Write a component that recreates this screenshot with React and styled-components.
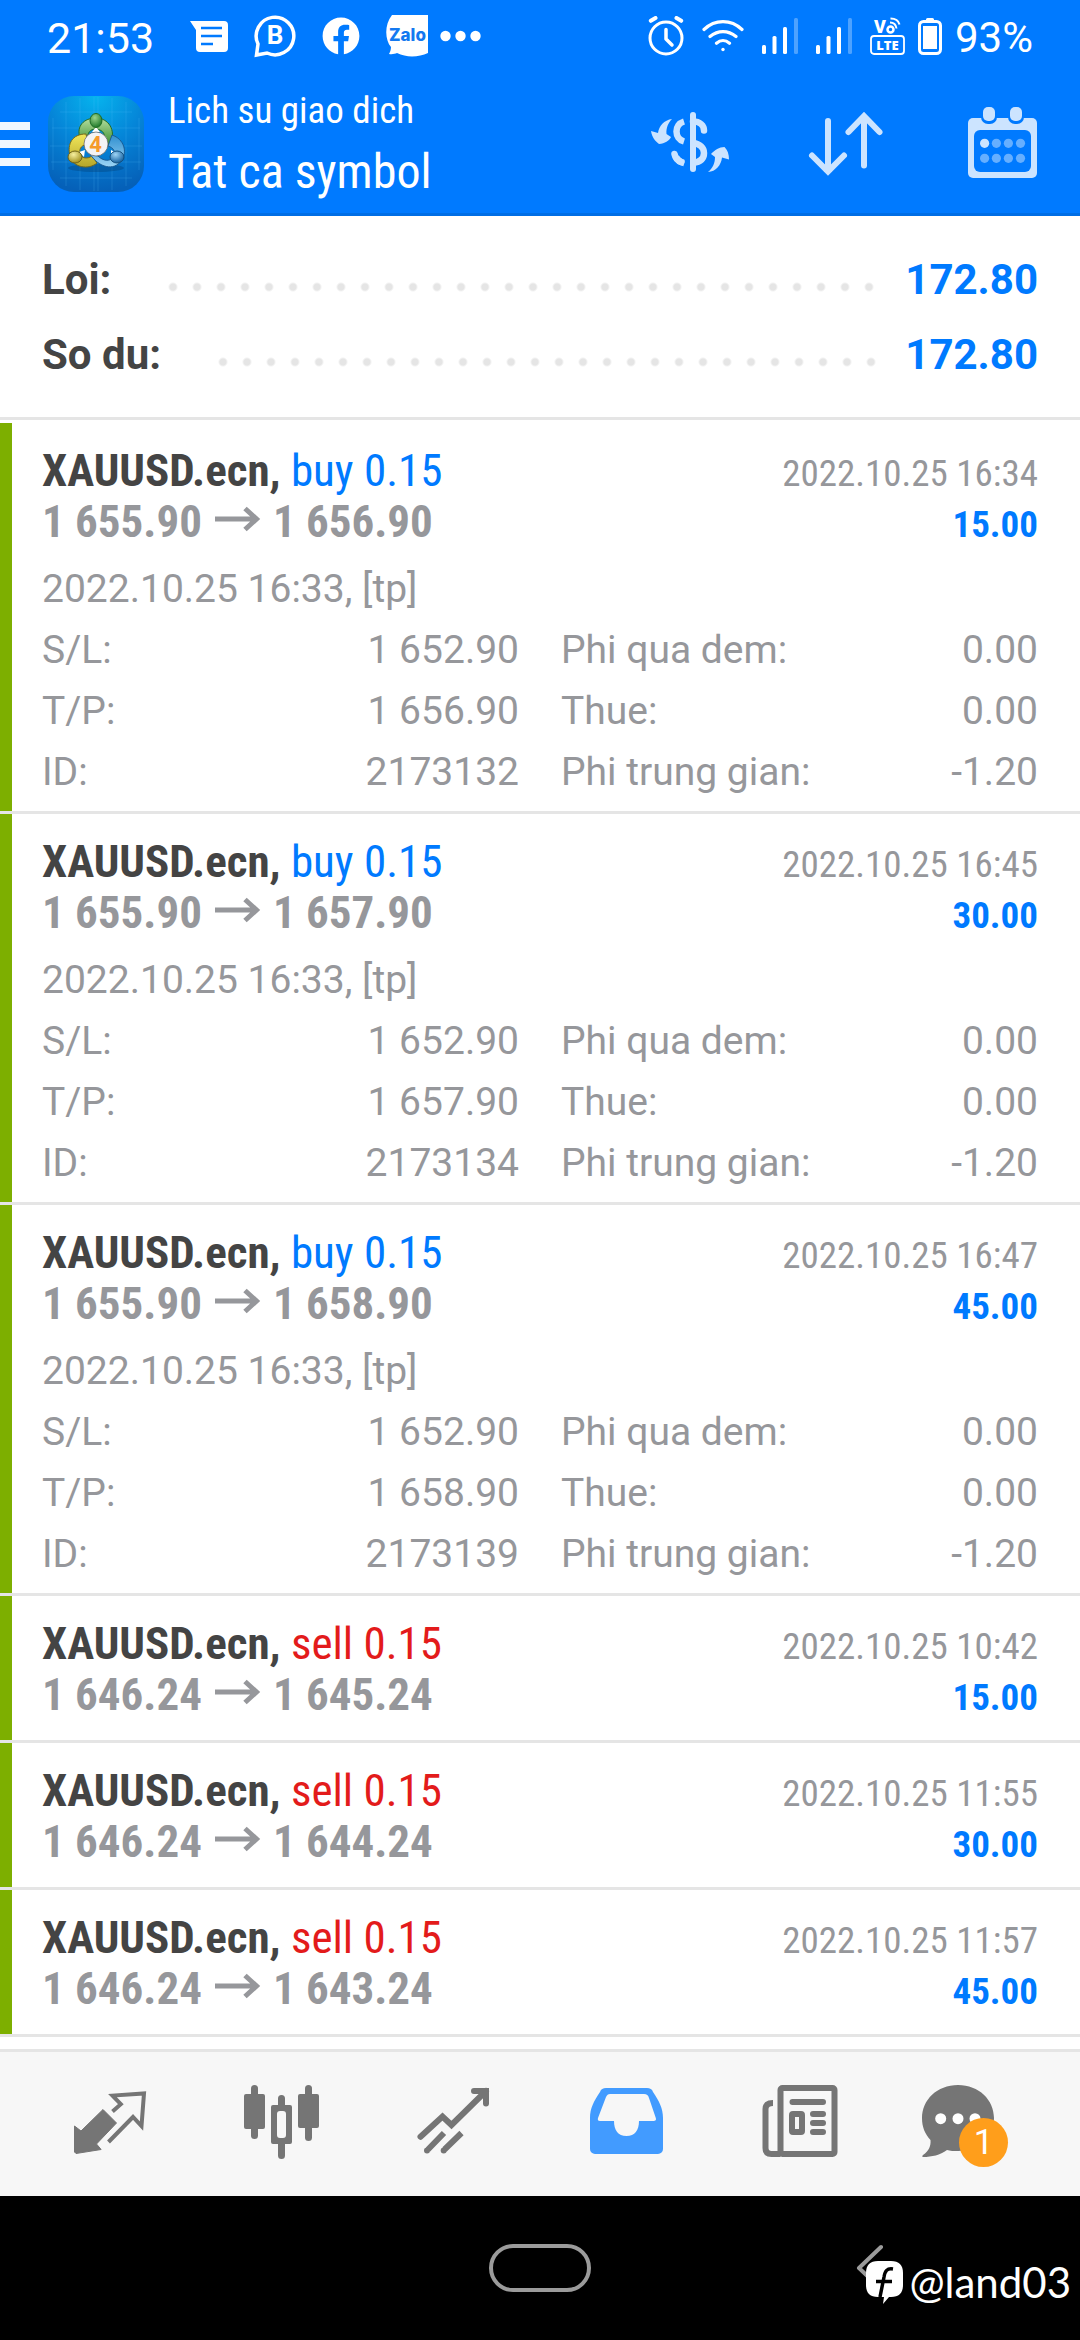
import React from 'react';
import styled, {createGlobalStyle} from 'styled-components';
import {FaFacebook} from 'react-icons/fa';

const GlobalStyle = createGlobalStyle `
  *{
    box-sizing: border-box;
  }
  body{
    margin: 0;
    background: #fff;
    font-family: Roboto, sans-serif;
  }
  h1, h2, p, dl, dt, dd, ul{
    margin: 0;
    padding: 0;
    font-weight: 400;
  }
  button{
    border: none;
    background: none;
    padding: 0;
    cursor: pointer;
  }
  svg{
    display: block;
    flex: none;
  }
`

const condensed = '"Roboto Condensed", Roboto, sans-serif'

const Screen = styled.div `
  min-height: 100vh;
  display: flex;
  flex-direction: column;
`

const Header = styled.header `
  background: #007aff;
  color: #fff;
  box-shadow: inset 0 -3px 0 #006ee5;
`

const StatusBar = styled.div `
  display: flex;
  justify-content: space-between;
  height: 72px;
  padding: 0 47px;
`

const StatusGroup = styled.div `
  display: flex;
  align-items: center;
  gap: ${props => props.$gap}px;
`

const StatusText = styled.span `
  font-size: 42px;
  line-height: 48px;
  padding-top: 3px;
`

const Clock = styled(StatusText) `
  font-size: 43px;
  margin-right: 10px;
`

const AppBar = styled.div `
  display: flex;
  align-items: center;
  height: 144px;
`

const MenuButton = styled.button `
  width: 30px;
  display: flex;
  flex-direction: column;
  gap: 10px;
  margin-right: 18px;
  span{
    height: 8px;
    background: #f0f7ff;
  }
`

const Titles = styled.div `
  flex: 1;
  padding: 4px 0 0 24px;
  font-family: ${condensed};
`

const Subtitle = styled.p `
  font-size: 37px;
  line-height: 52px;
`

const Title = styled.h1 `
  font-size: 48px;
  line-height: 70px;
`

const ToolButton = styled.button `
  width: 156px;
  height: 144px;
  display: flex;
  align-items: center;
  justify-content: center;
  color: #cce4ff;
`

const Summary = styled.section `
  padding: 26px 42px 25px;
  border-bottom: 3px solid #e5e5e5;
  margin-bottom: 3px;
`

const SummaryRow = styled.div `
  display: flex;
  align-items: baseline;
  font-size: 42px;
  line-height: 75px;
  font-weight: 700;
  color: #444;
`

const Leader = styled.span `
  flex: 1;
  height: 14px;
  margin: 0 25px 0 50px;
  background: radial-gradient(circle, #e5e5e5 3px, transparent 5px) 0 50% / 24px 14px repeat-x;
`

const SummaryValue = styled.span `
  color: #007aff;
`

const Deals = styled.ul `
  flex: 1;
  list-style: none;
`

const Deal = styled.li `
  border-bottom: 3px solid #e5e5e5;
`

const DealBody = styled.div `
  border-left: 12px solid #7daf00;
  padding: 22px 42px ${props => props.$open ? '8px' : '20px'} 30px;
`

const DealLine = styled.div `
  display: flex;
  align-items: baseline;
  justify-content: space-between;
  height: 51px;
  font-family: ${condensed};
  font-size: 37px;
  line-height: 51px;
  color: #96979b;
`

const Symbol = styled.h2 `
  font-size: 45px;
  color: ${props => props.$sell ? '#e31b1b' : '#007aff'};
  b{
    color: #444;
  }
`

const Prices = styled.p `
  font-size: 45px;
  font-weight: 700;
  svg{
    display: inline-block;
    margin: 0 11px 0 12px;
  }
`

const Profit = styled.b `
  color: #007aff;
`

const Details = styled.div `
  margin-top: 12px;
  font-size: 39px;
  line-height: 61px;
  color: #96979b;
`

const DetailList = styled.dl `
  display: grid;
  grid-template-columns: 1fr 1fr;
  column-gap: 42px;
  div{
    display: flex;
    justify-content: space-between;
  }
`

const TabBar = styled.nav `
  display: flex;
  padding: 0 24px;
  border-top: 3px solid #e5e5e5;
  background: #f7f7f7;
`

const Tab = styled.button `
  flex: 1;
  height: 144px;
  display: flex;
  align-items: center;
  justify-content: center;
  color: ${props => props.$active ? '#429bff' : '#757575'};
`

const TabIcon = styled.span `
  position: relative;
`

const Badge = styled.span `
  position: absolute;
  left: 37px;
  top: 42px;
  width: 49px;
  height: 49px;
  border-radius: 50%;
  background: #ff9e1b;
  color: #fff;
  font: 35px/49px Roboto, sans-serif;
  text-align: center;
`

const SystemNav = styled.div `
  position: relative;
  height: 144px;
  background: #000;
  display: grid;
  grid-template-columns: 1fr auto 1fr;
  align-items: center;
`

const HomeButton = styled.button `
  grid-column: 2;
  width: 102px;
  height: 48px;
  border: 4px solid #9b9b9b;
  border-radius: 24px;
`

const BackButton = styled.button `
  justify-self: end;
  margin-right: 196px;
`

const Watermark = styled.div `
  position: absolute;
  right: 9px;
  bottom: 33px;
  display: flex;
  align-items: center;
  gap: 6px;
  color: #fff;
  font: 42px/50px Lato, sans-serif;
`

const deals = [
  {side: 'buy', open: '1 655.90', close: '1 656.90', time: '2022.10.25 16:34', profit: '15.00', sl: '1 652.90', tp: '1 656.90', id: '2173132'},
  {side: 'buy', open: '1 655.90', close: '1 657.90', time: '2022.10.25 16:45', profit: '30.00', sl: '1 652.90', tp: '1 657.90', id: '2173134'},
  {side: 'buy', open: '1 655.90', close: '1 658.90', time: '2022.10.25 16:47', profit: '45.00', sl: '1 652.90', tp: '1 658.90', id: '2173139'},
  {side: 'sell', open: '1 646.24', close: '1 645.24', time: '2022.10.25 10:42', profit: '15.00'},
  {side: 'sell', open: '1 646.24', close: '1 644.24', time: '2022.10.25 11:55', profit: '30.00'},
  {side: 'sell', open: '1 646.24', close: '1 643.24', time: '2022.10.25 11:57', profit: '45.00'}
]

// status bar icons

const MessageIcon = () => (
  <svg width="38" height="31" viewBox="0 0 38 31">
    <path d="M0 0h34a4 4 0 0 1 4 4v23a4 4 0 0 1-4 4H10a4 4 0 0 1-4-4V9z" fill="#fff"/>
    <path d="M11 7h21M11 15h21M11 23h12" stroke="#007aff" strokeWidth="2.500"/>
  </svg>
)

const BusinessIcon = () => (
  <svg width="42" height="44" viewBox="0 0 42 44">
    <path d="M2.500 41l1.500-11A18.800 18.800 0 1 1 13 39z" fill="none" stroke="#fff" strokeWidth="3.500"/>
    <text x="21" y="30" textAnchor="middle" fontSize="26" fontWeight="700" fontFamily="Roboto" fill="#fff">B</text>
  </svg>
)

const ZaloIcon = () => (
  <svg width="42" height="42" viewBox="0 0 42 42">
    <path d="M6 0h36v38c-9 4-21 5-31 0-2 1-5 1.500-8 1 1-2 2-4 2-7C-1 25-2 10 6 0z" fill="#fff"/>
    <text x="21.500" y="26" textAnchor="middle" fontSize="17" fontWeight="800" fontFamily="Inter" fill="#1479f0">Zalo</text>
  </svg>
)

const DotsIcon = () => (
  <svg width="41" height="12" viewBox="0 0 41 12" fill="#fff">
    <circle cx="5.500" cy="6" r="5.200"/>
    <circle cx="20.500" cy="6" r="5.200"/>
    <circle cx="35.500" cy="6" r="5.200"/>
  </svg>
)

const AlarmIcon = () => (
  <svg width="36" height="40" viewBox="0 0 36 40" fill="none" stroke="#fff" strokeLinecap="round" strokeLinejoin="round">
    <circle cx="18" cy="22" r="16" strokeWidth="3"/>
    <path d="M18 13.500v9.500l6 6" strokeWidth="3.500"/>
    <path d="M2.800 4.800L7.500 2M33.200 4.800L28.500 2" strokeWidth="4"/>
  </svg>
)

const WifiIcon = () => (
  <svg width="42" height="32" viewBox="0 0 42 32" fill="none" stroke="#fff" strokeWidth="3.200" strokeLinecap="round">
    <path d="M2 9.500C13-1 29-1 40 9.500M8 16.500c8-6.500 18-6.500 26 0M14.500 23.200c4-3.500 9-3.500 13 0"/>
    <circle cx="21" cy="29.500" r="1.700" fill="#fff" stroke="none"/>
  </svg>
)

const SignalIcon = () => (
  <svg width="36" height="36" viewBox="0 0 36 36" fill="#fff">
    <rect x="0" y="27" width="4" height="9" rx="1.500"/>
    <rect x="10.500" y="18" width="4" height="18" rx="1.500"/>
    <rect x="21" y="9" width="4" height="27" rx="1.500"/>
    <rect x="32" y="0" width="4" height="36" rx="1.500" opacity=".3"/>
  </svg>
)

const VolteIcon = () => (
  <svg width="35" height="38" viewBox="0 0 35 38" fill="none" stroke="#fff">
    <text x="4" y="16" fontSize="18" fontWeight="900" fontFamily="Roboto" fill="#fff" stroke="none">V</text>
    <circle cx="20.500" cy="12.500" r="3" strokeWidth="2.500"/>
    <path d="M20 5.500c4 0 6 2 6.500 6M20.500 1.500c5 0 8 2 9 6" strokeWidth="2"/>
    <rect x="1" y="19" width="33" height="18" rx="3" strokeWidth="1.800"/>
    <text x="17.500" y="33" textAnchor="middle" fontSize="13" fontWeight="800" fontFamily="Open Sans" fill="#fff" stroke="none">LTE</text>
  </svg>
)

const BatteryIcon = () => (
  <svg width="24" height="37" viewBox="0 0 24 37">
    <path d="M8 2V1.500A1.500 1.500 0 0 1 9.500 0h5A1.500 1.500 0 0 1 16 1.500V3H8z" fill="#fff"/>
    <rect x="1.500" y="3.500" width="21" height="32" rx="4" fill="none" stroke="#fff" strokeWidth="3"/>
    <rect x="5" y="8" width="14" height="23" fill="#fff"/>
  </svg>
)

// app bar icons

const Logo = () => (
  <svg width="96" height="96" viewBox="0 0 96 96">
    <defs>
      <radialGradient id="sky" cx=".5" cy="0" r="1">
        <stop offset="0" stopColor="#06b4ee"/>
        <stop offset=".5" stopColor="#0585d8"/>
        <stop offset="1" stopColor="#0560b8"/>
      </radialGradient>
      <linearGradient id="green" x1="0" y1="0" x2="0" y2="1">
        <stop offset="0" stopColor="#b5dfa0"/>
        <stop offset="1" stopColor="#3c8f31"/>
      </linearGradient>
      <linearGradient id="yellow" x1="0" y1="0" x2="0" y2="1">
        <stop offset="0" stopColor="#f1e65a"/>
        <stop offset="1" stopColor="#b5a62a"/>
      </linearGradient>
      <linearGradient id="blue" x1="0" y1="0" x2="0" y2="1">
        <stop offset="0" stopColor="#2f8fd0"/>
        <stop offset="1" stopColor="#9bd4f5"/>
      </linearGradient>
      <radialGradient id="greenBall" cx=".4" cy=".3" r=".7">
        <stop offset="0" stopColor="#9bd48b"/>
        <stop offset="1" stopColor="#1f7a2a"/>
      </radialGradient>
      <radialGradient id="yellowBall" cx=".4" cy=".3" r=".7">
        <stop offset="0" stopColor="#f6f0a0"/>
        <stop offset="1" stopColor="#a08f1c"/>
      </radialGradient>
      <radialGradient id="blueBall" cx=".4" cy=".3" r=".7">
        <stop offset="0" stopColor="#9ed4f5"/>
        <stop offset="1" stopColor="#14609f"/>
      </radialGradient>
    </defs>
    <rect width="96" height="96" rx="26" fill="url(#sky)"/>
    <path d="M5 22v52M18 6v84M32 2v92M46 1v94M50 1v94M64 2v92M78 6v84M91 22v52M4 32h88M2 50h92M3 66h90M12 82h72M12 16h72" stroke="#5cc2ff" strokeOpacity=".2" fill="none"/>
    <ellipse cx="48" cy="72" rx="28" ry="4" fill="#04386e" opacity=".35"/>
    <g strokeLinejoin="round" strokeWidth="1">
      <path d="M32 42c-4-12 4-20 16-20s21 12 14 26l-7-2c3-7 1-12-7-13-6 0-9 4-8 10z" fill="url(#green)" stroke="#256d22"/>
      <path d="M38 38c-14 0-19 10-16 22 3 12 19 14 27 7l-5-7c-4 3-11 3-12-3-1-5 2-8 8-9z" fill="url(#yellow)" stroke="#75691a"/>
      <path d="M64 39c12 4 16 17 9 26-7 10-22 7-31-7l8 2c5 5 12 6 15 1 3-5 1-9-5-11z" fill="url(#blue)" stroke="#1a5c94"/>
      <path d="M48 31l4 5h-8zM37 54l-1 7-5-5zM63 54l5 3-5 4z" fill="#fff"/>
      <ellipse cx="48" cy="24.500" rx="6" ry="7" fill="url(#greenBall)" stroke="#1f6b25"/>
      <ellipse cx="27" cy="61" rx="7" ry="6" fill="url(#yellowBall)" stroke="#6e631a"/>
      <ellipse cx="69" cy="61" rx="7" ry="6" fill="url(#blueBall)" stroke="#14507f"/>
    </g>
    <circle cx="48" cy="48" r="12" fill="#f3f3f5" stroke="#5c5c5c" strokeWidth=".7"/>
    <text x="47.500" y="56" textAnchor="middle" fontSize="22" fontWeight="700" fontFamily="Roboto" fill="#f59a2b">4</text>
  </svg>
)

const CurrencyIcon = () => (
  <svg width="96" height="96" viewBox="0 0 96 96" fill="none">
    <g stroke="currentColor" strokeWidth="6.500">
      <path d="M51 19v54" strokeLinecap="round" strokeWidth="6"/>
      <path d="M51 25.500c7 0 11 4 11 9M32.500 58c1 5 4 7 7 8" strokeLinecap="round"/>
      <path d="M42 25.500c-10 3-10 17 0 20M51 47c7 1 11 5 11 10 0 6-4 9-11 10M34 61c2 4 5 5.500 8 6"/>
    </g>
    <path d="M9 35l7 2c1-7 6-13 14-14-4 4-6 9-5.500 15l4.500 3c-2 4-6 6.500-12 7-4-3-7-7-8-13z" fill="currentColor"/>
    <path d="M66 76c5-4 7-9 7-15l-4-3c4-4 8-7 13.500-7 3 3 4.500 7 4.500 12.500l-7-2c-1 8-6 14-14 14.500z" fill="currentColor"/>
  </svg>
)

const SortIcon = () => (
  <svg width="96" height="96" viewBox="0 0 96 96" fill="none" stroke="currentColor" strokeWidth="6" strokeLinecap="round">
    <path d="M30 25v49M14 59.500l16 16 16-16M66 69.500V21M50.500 36L66 20l15.500 16"/>
  </svg>
)

const CalendarIcon = () => (
  <svg width="96" height="96" viewBox="0 0 96 96">
    <rect x="14" y="22" width="69" height="60" rx="5" fill="currentColor"/>
    <rect x="20" y="34" width="57" height="42" rx="6" fill="#007aff"/>
    <rect x="27" y="9" width="16" height="19" rx="7" fill="#007aff"/>
    <rect x="54" y="9" width="16" height="19" rx="7" fill="#007aff"/>
    <rect x="29" y="11" width="12" height="14" rx="5" fill="currentColor"/>
    <rect x="56" y="11" width="12" height="14" rx="5" fill="currentColor"/>
    {[47.3, 62.3].map(y => [30.600, 42.400, 54.400, 66.500].map(x => (
      <circle key={x + '-' + y} cx={x} cy={y} r="4.600" fill={x < 40 && y < 50 ? '#cce4ff' : '#66afff'}/>
    )))}
  </svg>
)

const PriceArrow = () => (
  <svg width="48" height="31" viewBox="0 0 48 31" fill="none" stroke="#96979b" strokeWidth="5">
    <path d="M1 13h42M31 2.500L42.500 13 31 23.500"/>
  </svg>
)

// tab bar icons

const QuotesIcon = () => (
  <svg width="96" height="96" viewBox="0 0 96 96">
    <path d="M41 33.500L54.500 47 34.500 68l4.600 5.500L14 77.500l-1.500-1.500V50l6.500 5z" fill="currentColor" stroke="currentColor" strokeLinejoin="round"/>
    <path d="M50.500 35.500l8.300-7.300-8.300-8.600L82 17.500 79.500 50 71 41 46.500 66" fill="none" stroke="currentColor" strokeWidth="4"/>
  </svg>
)

const ChartIcon = () => (
  <svg width="96" height="96" viewBox="0 0 96 96" fill="currentColor">
    <rect x="10" y="18" width="21" height="35" rx="2"/>
    <rect x="17" y="9" width="7" height="54" rx="3.500"/>
    <path fillRule="evenodd" d="M39 29h17a2 2 0 0 1 2 2v35a2 2 0 0 1-2 2H39a2 2 0 0 1-2-2V31a2 2 0 0 1 2-2zm7 6a3 3 0 0 0-3 3v21a3 3 0 0 0 3 3h3a3 3 0 0 0 3-3V38a3 3 0 0 0-3-3z"/>
    <path d="M44 30v-7.500a3.500 3.500 0 0 1 7 0V30zM44 67v12.500a3.500 3.500 0 0 0 7 0V67z"/>
    <rect x="64" y="18" width="21" height="34" rx="2"/>
    <rect x="71" y="9" width="7" height="56" rx="3.500"/>
  </svg>
)

const TradeIcon = () => (
  <svg width="96" height="96" viewBox="0 0 96 96" fill="none" stroke="currentColor" strokeWidth="6">
    <path d="M14.500 60.700l22-20.200 9 8.500L80 15M68 15h12v12.500" strokeLinecap="round"/>
    <path d="M22 73.500L38 57M38.500 73.500L55.500 57"/>
    <circle cx="21" cy="74.500" r="3" fill="currentColor" stroke="none"/>
    <circle cx="37.700" cy="74.500" r="3" fill="currentColor" stroke="none"/>
  </svg>
)

const HistoryIcon = () => (
  <svg width="96" height="96" viewBox="0 0 96 96" fill="currentColor">
    <path fillRule="evenodd" d="M28 12h41c3 0 5 1 6 4 6 9 10 16 10 26v31a5 5 0 0 1-5 5H17a5 5 0 0 1-5-5V42c0-10 4-17 10-26 1-3 3-4 6-4zm4 6c-2 0-3 1-4 3l-8 21c-.5 2 0 3 2 3h14c0 9 4 15 12.500 15S61 54 61 45h14.500c2 0 3-1 2.300-3L71 22c-1-3-2-4-5-4z"/>
  </svg>
)

const NewsIcon = () => (
  <svg width="96" height="96" viewBox="0 0 96 96" fill="none" stroke="currentColor" strokeWidth="6">
    <rect x="30.500" y="12" width="54" height="66" rx="2"/>
    <path d="M23 27c-5 0-7.500 2-7.500 6v39c0 4 2 6 6 6h9"/>
    <path d="M42.500 26H73M63 38h10M63 47h10M63 56h10" strokeLinecap="round"/>
    <rect x="42" y="38" width="10" height="18" rx="1"/>
  </svg>
)

const ChatIcon = () => (
  <svg width="96" height="96" viewBox="0 0 96 96">
    <path d="M36 9c21 0 36 15 36 33S57 75 36 75c-4 0-8 0-11-1-7 5-15 7-24 7-1 0-1-1 0-2 6-4 8-9 7.500-15C3 58 0 51 0 42 0 24 15 9 36 9z" fill="currentColor"/>
    <g fill="#fff">
      <circle cx="18.700" cy="42.700" r="5.500"/>
      <circle cx="36" cy="42.700" r="5.500"/>
      <circle cx="53" cy="42.700" r="5.500"/>
    </g>
  </svg>
)

const BackIcon = () => (
  <svg width="28" height="48" viewBox="0 0 28 48" fill="none" stroke="#9b9b9b" strokeWidth="4" strokeLinecap="round" strokeLinejoin="round">
    <path d="M25 3L3 24l22 21"/>
  </svg>
)

const WatermarkLogo = () => (
  <svg width="37" height="43" viewBox="0 0 37 43">
    <path d="M12 0h13c8 0 12 4 12 12v12c0 8-4 12-12 12h-2l-6 7 1-7h-6C4 36 0 32 0 24V12C0 4 4 0 12 0z" fill="#fff"/>
    <path d="M27 8c-6-1-8 2-9 8l-4 20M10 20.500h16" fill="none" stroke="#000" strokeWidth="3.500"/>
  </svg>
)

const DealItem = ({deal}) => (
  <Deal>
    <DealBody $open={!!deal.id}>
      <DealLine>
        <Symbol $sell={deal.side === 'sell'}><b>XAUUSD.ecn,</b> {deal.side} 0.15</Symbol>
        <span>{deal.time}</span>
      </DealLine>
      <DealLine>
        <Prices>{deal.open}<PriceArrow/>{deal.close}</Prices>
        <Profit>{deal.profit}</Profit>
      </DealLine>
      {deal.id && (
        <Details>
          <p>2022.10.25 16:33, [tp]</p>
          <DetailList>
            <div><dt>S/L:</dt><dd>{deal.sl}</dd></div>
            <div><dt>Phi qua dem:</dt><dd>0.00</dd></div>
            <div><dt>T/P:</dt><dd>{deal.tp}</dd></div>
            <div><dt>Thue:</dt><dd>0.00</dd></div>
            <div><dt>ID:</dt><dd>{deal.id}</dd></div>
            <div><dt>Phi trung gian:</dt><dd>-1.20</dd></div>
          </DetailList>
        </Details>
      )}
    </DealBody>
  </Deal>
)

const App = () => {
  return (
    <Screen>
      <GlobalStyle/>
      <Header>
        <StatusBar>
          <StatusGroup $gap={26}>
            <Clock>21:53</Clock>
            <MessageIcon/>
            <BusinessIcon/>
            <FaFacebook size={38}/>
            <StatusGroup $gap={12}>
              <ZaloIcon/>
              <DotsIcon/>
            </StatusGroup>
          </StatusGroup>
          <StatusGroup $gap={18}>
            <AlarmIcon/>
            <WifiIcon/>
            <SignalIcon/>
            <SignalIcon/>
            <StatusGroup $gap={13}>
              <VolteIcon/>
              <BatteryIcon/>
              <StatusText>93%</StatusText>
            </StatusGroup>
          </StatusGroup>
        </StatusBar>
        <AppBar>
          <MenuButton aria-label="Menu"><span/><span/><span/></MenuButton>
          <Logo/>
          <Titles>
            <Subtitle>Lich su giao dich</Subtitle>
            <Title>Tat ca symbol</Title>
          </Titles>
          <ToolButton aria-label="Symbol"><CurrencyIcon/></ToolButton>
          <ToolButton aria-label="Sort"><SortIcon/></ToolButton>
          <ToolButton aria-label="Period"><CalendarIcon/></ToolButton>
        </AppBar>
      </Header>

      <Summary>
        <SummaryRow>
          <span>Loi:</span>
          <Leader/>
          <SummaryValue>172.80</SummaryValue>
        </SummaryRow>
        <SummaryRow>
          <span>So du:</span>
          <Leader/>
          <SummaryValue>172.80</SummaryValue>
        </SummaryRow>
      </Summary>

      <Deals>
        {deals.map(deal => <DealItem key={deal.time} deal={deal}/>)}
      </Deals>

      <TabBar>
        <Tab aria-label="Quotes"><QuotesIcon/></Tab>
        <Tab aria-label="Chart"><ChartIcon/></Tab>
        <Tab aria-label="Trade"><TradeIcon/></Tab>
        <Tab aria-label="History" $active><HistoryIcon/></Tab>
        <Tab aria-label="News"><NewsIcon/></Tab>
        <Tab aria-label="Messages">
          <TabIcon>
            <ChatIcon/>
            <Badge>1</Badge>
          </TabIcon>
        </Tab>
      </TabBar>

      <SystemNav>
        <HomeButton aria-label="Home"/>
        <BackButton aria-label="Back"><BackIcon/></BackButton>
        <Watermark>
          <WatermarkLogo/>
          @land03
        </Watermark>
      </SystemNav>
    </Screen>
  )
}

export default App;
